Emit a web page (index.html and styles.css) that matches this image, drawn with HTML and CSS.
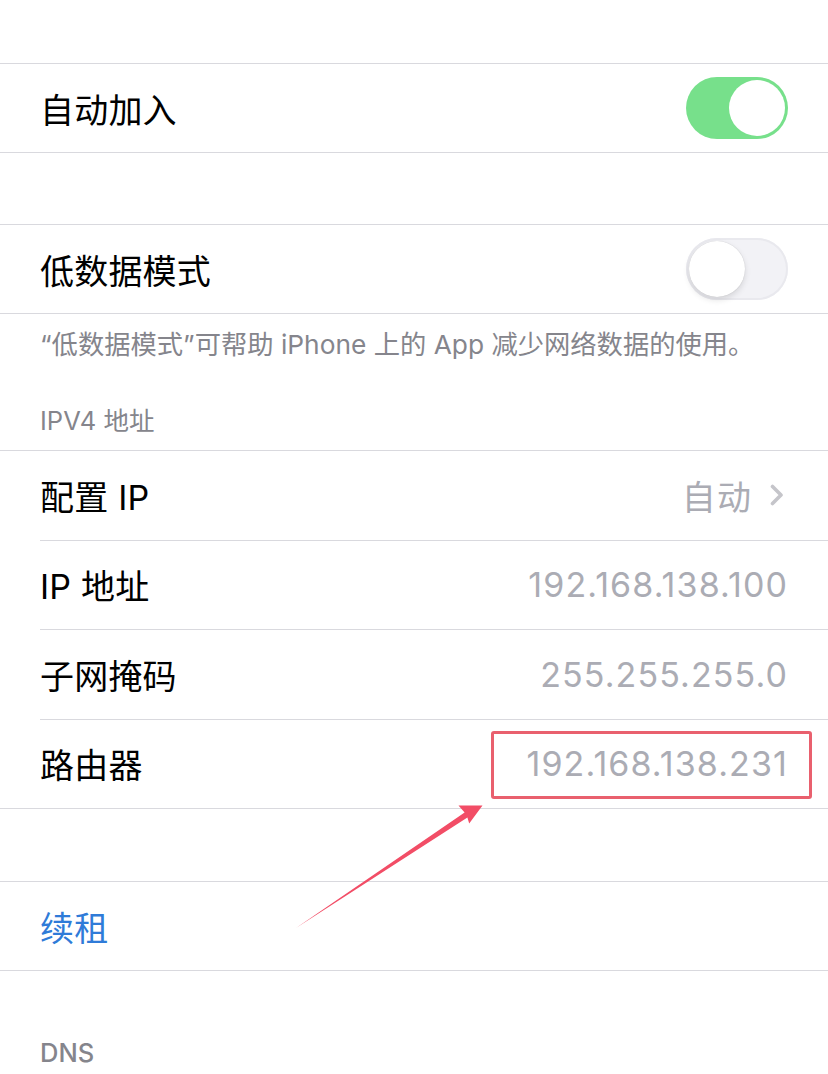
FILE: index.html
```html
<!DOCTYPE html>
<html lang="zh-CN">
<head>
    <meta charset="UTF-8">
    <meta name="viewport" content="width=device-width, initial-scale=1.0">
    <title>Wi-Fi 详情</title>
    <link rel="stylesheet" href="styles.css">
</head>
<body>
    <main class="page">
        <div class="spacer top"></div>

        <section class="group">
            <div class="row">
                <span class="label">自动加入</span>
                <span class="switch on"><span class="knob"></span></span>
            </div>
        </section>

        <div class="spacer"></div>

        <section class="group">
            <div class="row">
                <span class="label">低数据模式</span>
                <span class="switch"><span class="knob"></span></span>
            </div>
        </section>
        <p class="footnote">“低数据模式”可帮助 iPhone 上的 App 减少网络数据的使用。</p>

        <h3 class="section-title">IPV4 地址</h3>
        <section class="group multi">
            <div class="row">
                <span class="label">配置 IP</span>
                <span class="value">自动
                    <svg class="chevron" width="14" height="22" viewBox="0 0 14 22">
                        <path d="M2.5 2.5 L11 11 L2.5 19.5" fill="none" stroke="#c5c5ca" stroke-width="3.6" stroke-linecap="round" stroke-linejoin="round"/>
                    </svg>
                </span>
            </div>
            <div class="row">
                <span class="label">IP 地址</span>
                <span class="value">192.168.138.100</span>
            </div>
            <div class="row">
                <span class="label">子网掩码</span>
                <span class="value">255.255.255.0</span>
            </div>
            <div class="row marked">
                <span class="label">路由器</span>
                <span class="value">192.168.138.231</span>
            </div>
        </section>

        <div class="spacer wide"></div>

        <section class="group">
            <div class="row">
                <span class="label link">续租</span>
            </div>
        </section>

        <h3 class="section-title dns">DNS</h3>

        <!-- annotation arrow pointing at the router address -->
        <svg class="arrow" width="828" height="1074" viewBox="0 0 828 1074">
            <polygon points="296,928 467.4,817.6 469.2,823.6 482.5,805.5 458.5,805.6 464.6,812.4" fill="#f24d66"/>
        </svg>
    </main>
</body>
</html>
```

FILE: styles.css
```css
* {
    padding: 0;
    margin: 0;
    box-sizing: border-box;
}

body {
    background: #fff;
    font-family: Inter, "Noto Sans CJK SC", sans-serif;
    color: #000;
}

.page {
    position: relative;
    width: 828px;
    min-height: 1074px;
    overflow: hidden;
}

.spacer {
    height: 71px;
}

.spacer.top {
    height: 63px;
}

.spacer.wide {
    height: 72px;
}

.group {
    border-top: 1px solid #d9d9de;
    border-bottom: 1px solid #d9d9de;
}

.row {
    position: relative;
    display: flex;
    align-items: center;
    justify-content: space-between;
    height: 88px;
    padding: 0 40px;
}

.group.multi .row {
    height: 88.5px;
}

.row + .row {
    margin-top: 1px;
}

.row + .row::before {
    content: "";
    position: absolute;
    left: 40px;
    right: 0;
    top: -1px;
    height: 1px;
    background: #d9d9de;
}

/* red annotation frame around the router value */
.row.marked::after {
    content: "";
    position: absolute;
    right: 16px;
    top: 11px;
    bottom: 9px;
    width: 315px;
    border: 3px solid #e9606e;
    border-radius: 3px;
}

.label {
    font-size: 34px;
    letter-spacing: 0.2px;
}

.label.link {
    color: #2f7bd8;
}

.value {
    display: flex;
    align-items: center;
    font-size: 34px;
    letter-spacing: 1.1px;
    color: #abacb4;
}

.chevron {
    margin: 0 4px 0 18px;
}

.switch {
    position: relative;
    width: 102px;
    height: 62px;
    border-radius: 31px;
    background: #f2f2f6;
    box-shadow: inset 0 0 0 2px #e9e9ee;
}

.switch .knob {
    position: absolute;
    top: 3px;
    left: 3px;
    width: 56px;
    height: 56px;
    border-radius: 50%;
    background: #fff;
    box-shadow: 0 3px 6px rgba(0, 0, 0, 0.12), 0 0 1px rgba(0, 0, 0, 0.2);
}

.switch.on {
    background: #77e08b;
    box-shadow: none;
}

.switch.on .knob {
    left: 43px;
    box-shadow: none;
}

.footnote {
    padding: 13px 40px 0 40px;
    font-size: 26.3px;
    line-height: 36px;
    color: #85858c;
}

.section-title {
    padding: 40px 40px 11px 40px;
    font-size: 25.5px;
    line-height: 36px;
    font-weight: 400;
    color: #85858c;
}

.section-title.dns {
    padding-top: 64px;
    font-weight: 500;
}

.arrow {
    position: absolute;
    left: 0;
    top: 0;
    pointer-events: none;
}
```
